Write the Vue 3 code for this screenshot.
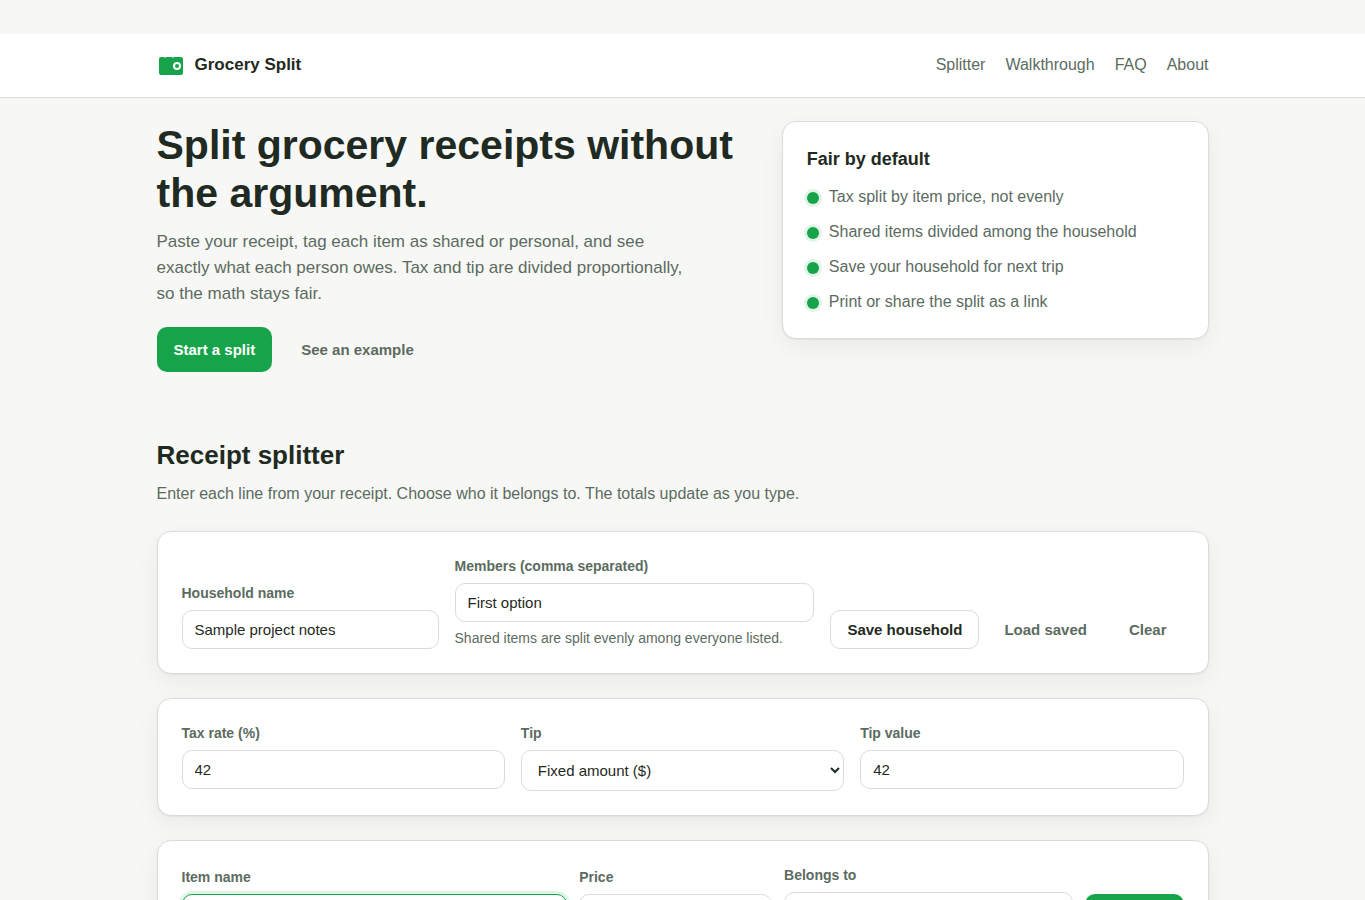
<template>
    <div class="page">
        <header class="site-header">
            <div class="container header-inner">
                <a class="brand" href="#">
                    <svg width="28" height="28" viewBox="0 0 28 28" aria-hidden="true">
                        <path
                            d="M4 6h3l1 1 1-1h6l1 1 1-1h7q2 0 2 2v14q0 2-2 2H4q-2 0-2-2V8q0-2 2-2z"
                            fill="#16a34a" />
                        <circle cx="20" cy="15" r="3" fill="#16a34a" stroke="#fff" stroke-width="2" />
                    </svg>
                    <span>Grocery Split</span>
                </a>
                <nav class="nav">
                    <a v-for="link in links" :key="link" href="#">{{ link }}</a>
                </nav>
            </div>
        </header>

        <main class="container">
            <section class="hero">
                <div>
                    <h1>Split grocery receipts without the argument.</h1>
                    <p class="lead">
                        Paste your receipt, tag each item as shared or personal, and see exactly what each person
                        owes. Tax and tip are divided proportionally, so the math stays fair.
                    </p>
                    <div class="hero-actions">
                        <a class="btn btn-primary" href="#splitter">Start a split</a>
                        <a class="btn btn-ghost" href="#">See an example</a>
                    </div>
                </div>
                <aside class="card">
                    <h3>Fair by default</h3>
                    <ul class="benefits">
                        <li v-for="benefit in benefits" :key="benefit">{{ benefit }}</li>
                    </ul>
                </aside>
            </section>

            <section id="splitter" class="splitter">
                <div>
                    <h2>Receipt splitter</h2>
                    <p class="sub">
                        Enter each line from your receipt. Choose who it belongs to. The totals update as you type.
                    </p>
                </div>

                <div class="card household">
                    <div class="field">
                        <label for="household">Household name</label>
                        <input id="household" v-model="household" type="text" />
                    </div>
                    <div class="field">
                        <label for="members">Members (comma separated)</label>
                        <input id="members" v-model="members" type="text" />
                        <span class="hint">Shared items are split evenly among everyone listed.</span>
                    </div>
                    <div class="actions">
                        <button class="btn btn-outline" type="button">Save household</button>
                        <button class="btn btn-ghost" type="button">Load saved</button>
                        <button class="btn btn-ghost" type="button">Clear</button>
                    </div>
                </div>

                <div class="card rates">
                    <div class="field">
                        <label for="tax">Tax rate (%)</label>
                        <input id="tax" v-model="tax" type="text" inputmode="decimal" />
                    </div>
                    <div class="field">
                        <label for="tip-type">Tip</label>
                        <select id="tip-type" v-model="tipType">
                            <option value="percent">Percent (%)</option>
                            <option value="fixed">Fixed amount ($)</option>
                        </select>
                    </div>
                    <div class="field">
                        <label for="tip-value">Tip value</label>
                        <input id="tip-value" v-model="tipValue" type="text" inputmode="decimal" />
                    </div>
                </div>

                <form class="card add-item" @submit.prevent>
                    <div class="field">
                        <label for="item-name">Item name</label>
                        <input id="item-name" ref="itemInput" v-model="itemName" type="text" />
                    </div>
                    <div class="field">
                        <label for="price">Price</label>
                        <input id="price" v-model="price" type="text" inputmode="decimal" />
                    </div>
                    <div class="field">
                        <label for="owner">Belongs to</label>
                        <select id="owner" v-model="owner">
                            <option value="shared">Shared</option>
                        </select>
                    </div>
                    <button class="btn btn-primary" type="submit">Add item</button>
                </form>
            </section>
        </main>
    </div>
</template>

<script setup>
import { onMounted, ref } from 'vue';

const links = ['Splitter', 'Walkthrough', 'FAQ', 'About'];
const benefits = [
    'Tax split by item price, not evenly',
    'Shared items divided among the household',
    'Save your household for next trip',
    'Print or share the split as a link'
];

const household = ref('Sample project notes');
const members = ref('First option');
const tax = ref('42');
const tipType = ref('fixed');
const tipValue = ref('42');
const itemName = ref('');
const price = ref('');
const owner = ref('shared');
const itemInput = ref(null);

onMounted(() => {
    itemInput.value.focus({ preventScroll: true });
});
</script>

<style>
body {
    margin: 0;
    background: #f7f8f5;
}
</style>

<style scoped>
.page {
    --ink: #1f2a22;
    --muted: #5c6b5f;
    --line: #d9ddd8;
    --green: #16a34a;
    --ring: #e0f5e7;
    padding: 34px 0 24px;
    color: var(--ink);
    font: 16px/25px "Liberation Sans", Arial, sans-serif;
}

.page * {
    box-sizing: border-box;
}

.container {
    max-width: 1100px;
    margin: 0 auto;
    padding: 0 24px;
}

.site-header {
    padding-bottom: 2px;
    background: #fff;
    border-bottom: 1px solid var(--line);
}

.header-inner {
    display: flex;
    align-items: center;
    justify-content: space-between;
    min-height: 61px;
}

.brand {
    display: flex;
    align-items: center;
    gap: 10px;
    color: var(--ink);
    font-size: 17px;
    font-weight: 700;
    text-decoration: none;
}

.nav {
    display: flex;
    gap: 20px;
}

.nav a {
    color: var(--muted);
    text-decoration: none;
}

.hero {
    display: grid;
    grid-template-columns: 7fr 5fr;
    gap: 28px;
    align-items: start;
    padding: 23px 0 68px;
}

h1,
h2,
h3,
p {
    margin: 0;
}

h1 {
    font-size: 41px;
    line-height: 48px;
}

h2 {
    font-size: 26px;
    line-height: 31px;
}

h3 {
    font-size: 18px;
    line-height: 26px;
}

.lead {
    max-width: 540px;
    margin: 12px 0 20px;
    color: var(--muted);
    font-size: 17px;
    line-height: 26px;
}

.sub {
    margin-top: 10px;
    color: var(--muted);
    line-height: 26px;
}

.hero-actions {
    display: flex;
    flex-wrap: wrap;
    gap: 12px;
}

.card {
    padding: 24px;
    background: #fff;
    border: 1px solid var(--line);
    border-radius: 14px;
    box-shadow: 0 1px 2px rgba(31, 42, 34, 0.06), 0 8px 24px rgba(31, 42, 34, 0.06);
}

.benefits {
    display: grid;
    gap: 10px;
    margin: 12px 0 0;
    padding: 0;
    color: var(--muted);
    list-style: none;
}

.benefits li {
    display: flex;
    gap: 10px;
}

.benefits li::before {
    content: "";
    flex: none;
    width: 12px;
    height: 12px;
    margin-top: 8px;
    border-radius: 50%;
    background: var(--green);
    box-shadow: 0 0 0 3px var(--ring);
}

.splitter {
    display: grid;
    gap: 24px;
}

.household {
    display: grid;
    grid-template-columns: 1fr 1.4fr auto;
    gap: 16px;
    align-items: end;
}

.rates {
    display: grid;
    grid-template-columns: repeat(3, 1fr);
    gap: 16px;
    align-items: start;
}

.add-item {
    display: grid;
    grid-template-columns: 2fr 1fr 1.5fr auto;
    gap: 12px;
    align-items: end;
}

.field {
    display: grid;
    gap: 6px;
    min-width: 0;
}

label,
.hint {
    color: var(--muted);
    font-size: 14px;
    line-height: 21px;
}

label {
    font-weight: 700;
}

input,
select {
    width: 100%;
    padding: 10px 12px;
    border: 1px solid var(--line);
    border-radius: 10px;
    background: #fff;
    color: var(--ink);
    font: 15px "Liberation Sans", Arial, sans-serif;
}

input:focus {
    border-color: var(--green);
    outline: none;
    box-shadow: 0 0 0 3px var(--ring);
}

.actions {
    display: flex;
    gap: 8px;
}

.btn {
    padding: 10px 16px;
    border: 1px solid transparent;
    border-radius: 10px;
    background: transparent;
    font: 700 15px "Liberation Sans", Arial, sans-serif;
    text-decoration: none;
    white-space: nowrap;
    cursor: pointer;
}

.hero-actions .btn {
    line-height: 23px;
}

.btn-primary {
    background: var(--green);
    color: #fff;
}

.btn-outline {
    border-color: var(--line);
    background: #fff;
    color: var(--ink);
}

.btn-ghost {
    color: var(--muted);
}
</style>
